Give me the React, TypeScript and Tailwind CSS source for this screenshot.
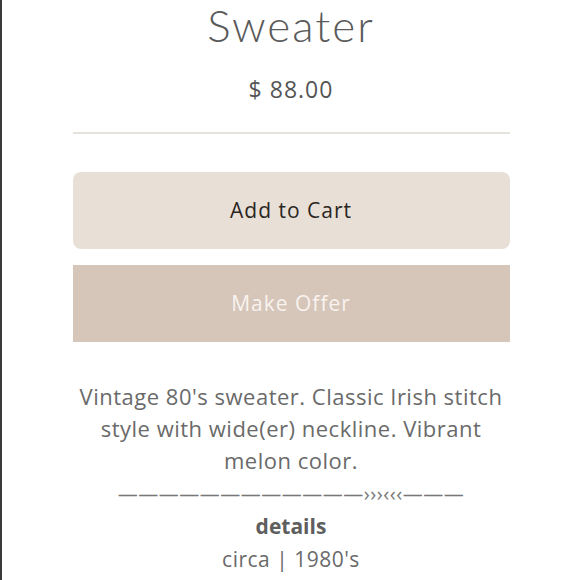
export default function App() {
  return (
    <div className="relative h-[580px] w-[580px] overflow-hidden border-l-2 border-[#3a3a3a] bg-white">
      <div className="mx-auto flex w-[437px] flex-col items-center" style={{ fontFamily: "'Open Sans', 'Noto Sans', sans-serif" }}>
        <h1
          className="-mt-[44px] text-center text-[44px] font-light leading-[46px] tracking-[2px] text-[#5a5a5a]"
          style={{ fontFamily: "Lato, sans-serif" }}
        >
          Irish Fisherman
          <br />
          Sweater
        </h1>
        <p className="mt-[26px] text-[23px] leading-[30px] tracking-[1px] text-[#555]">$ 88.00</p>
        <div className="mt-[28px] h-[2px] w-full bg-[#e6e3dc]" />
        <button className="mt-[38px] h-[77px] w-full rounded-[8px] bg-[#e8e0d7] text-[21px] tracking-[1px] text-[#2b2622]">
          Add to Cart
        </button>
        <button className="mt-[16px] h-[77px] w-full bg-[#d6c5b9] text-[21px] tracking-[1px] text-[#f8f3ef]">
          Make Offer
        </button>
        <p className="mt-[38px] w-[440px] text-center text-[22px] leading-[32px] tracking-[0.5px] text-[#6a6a6a]">
          Vintage 80's sweater. Classic Irish stitch style with wide(er) neckline. Vibrant melon color.
        </p>
        <p className="mt-[2px] text-[20px] leading-[32px] tracking-[0.5px] text-[#777]">————————————›››‹‹‹———</p>
        <p className="text-[21px] font-bold leading-[33px] text-[#5e5e5e]">details</p>
        <p className="text-[21px] leading-[33px] tracking-[0.5px] text-[#6a6a6a]">circa | 1980's</p>
      </div>
    </div>
  );
}
